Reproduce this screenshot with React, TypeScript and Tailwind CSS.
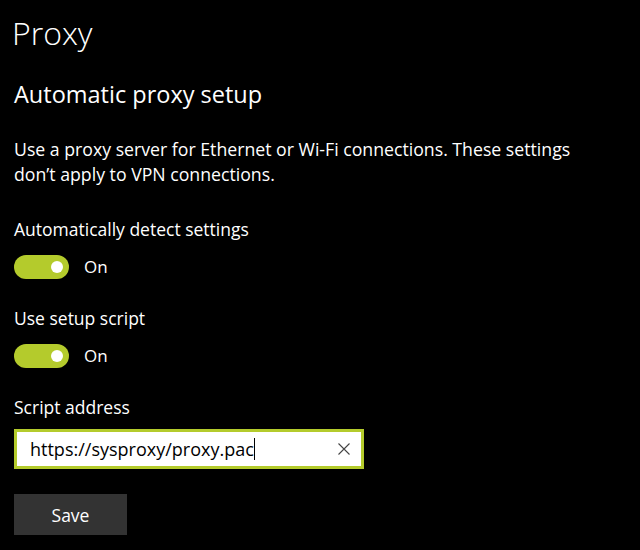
function Toggle({ on }: { on: boolean }) {
  return (
    <div className="flex items-center gap-[15px]">
      <div className="w-[55px] h-[24px] rounded-full bg-[#b4cb2c] flex items-center justify-end pr-[6px]">
        <div className="w-[12px] h-[12px] rounded-full bg-white" />
      </div>
      <span className="text-[17px] leading-[25px] text-white">{on ? 'On' : 'Off'}</span>
    </div>
  );
}

export default function App() {
  return (
    <div
      className="w-[640px] h-[550px] bg-black text-white pl-[14px] pt-[11px] overflow-hidden"
      style={{ fontFamily: '"Open Sans", "Noto Sans", sans-serif' }}
    >
      <h1 className="text-[32px] leading-[44px] font-light -ml-[2px]">Proxy</h1>

      <h2 className="mt-[22px] text-[23.5px] leading-[34px]">Automatic proxy setup</h2>

      <p className="mt-[26px] text-[17.7px] leading-[25px] w-[580px]">
        Use a proxy server for Ethernet or Wi-Fi connections. These settings don’t apply to VPN connections.
      </p>

      <div className="mt-[30px] text-[17.5px] leading-[25px]">Automatically detect settings</div>
      <div className="mt-[12px]">
        <Toggle on />
      </div>

      <div className="mt-[27px] text-[17.5px] leading-[25px]">Use setup script</div>
      <div className="mt-[12px]">
        <Toggle on />
      </div>

      <div className="mt-[27px] text-[17.5px] leading-[25px]">Script address</div>
      <div className="mt-[9px] w-[350px] h-[40px] border-[3px] border-[#b4cb2c] bg-white flex items-center pl-[13px] pr-[11px]">
        <div className="flex-1 min-w-0 flex items-center text-black text-[18px] leading-[26px]">
          <span>https://sysproxy/proxy.pac</span>
          <span className="w-px h-[22px] bg-black" />
        </div>
        <svg width="12" height="12" viewBox="0 0 12 12" className="shrink-0">
          <path d="M0.5 0.5 L11.5 11.5 M11.5 0.5 L0.5 11.5" stroke="#444" strokeWidth="1.1" />
        </svg>
      </div>

      <button className="mt-[25px] w-[113px] h-[41px] bg-[#333333] text-white text-[17.5px] pt-px">Save</button>
    </div>
  );
}
